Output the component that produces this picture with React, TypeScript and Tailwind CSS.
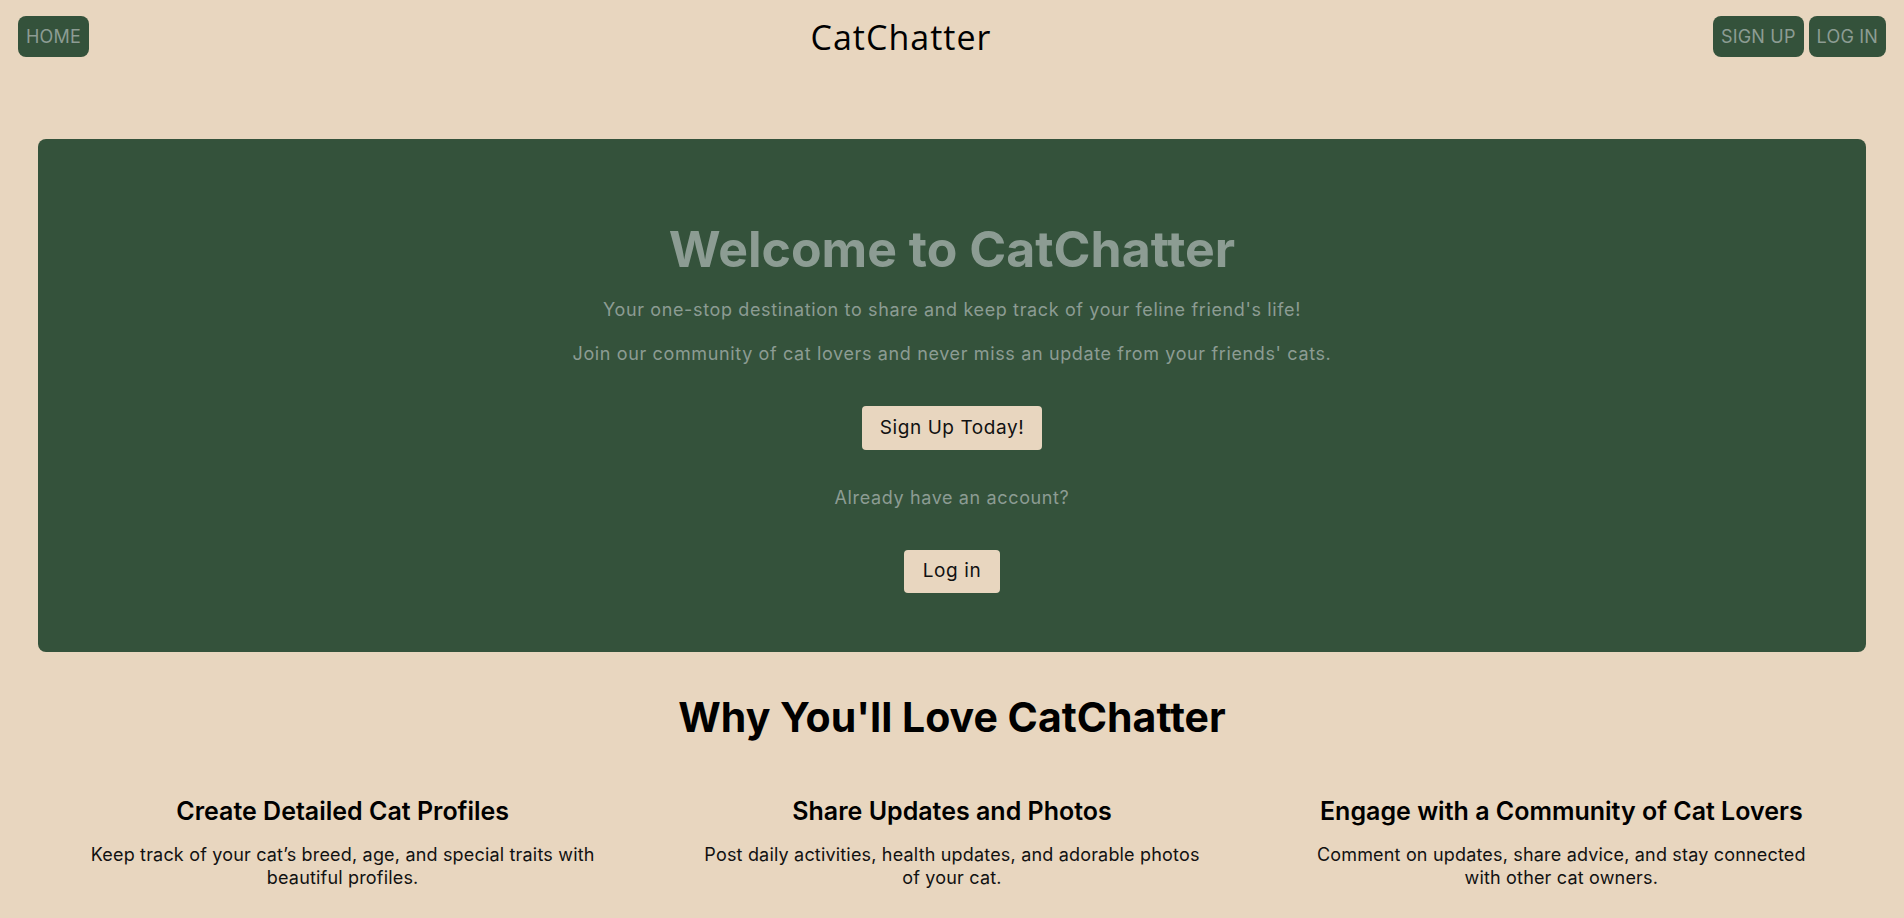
const features = [
  {
    title: 'Create Detailed Cat Profiles',
    body: 'Keep track of your cat’s breed, age, and special traits with beautiful profiles.',
  },
  {
    title: 'Share Updates and Photos',
    body: 'Post daily activities, health updates, and adorable photos of your cat.',
  },
  {
    title: 'Engage with a Community of Cat Lovers',
    body: 'Comment on updates, share advice, and stay connected with other cat owners.',
  },
];

const NavButton = ({ label }: { label: string }) => (
  <button className="h-[41px] rounded-lg bg-[#34523b] px-2 text-[18px] uppercase tracking-[0.01em] text-[#8c9c93]">
    {label}
  </button>
);

const App = () => {
  return (
    <div className="min-h-screen bg-[#e8d6bf] font-['Inter',sans-serif] text-[#111]">
      <header className="flex items-center justify-between px-[18px] pt-4">
        <NavButton label="Home" />
        <h1 className="font-['Open_Sans',sans-serif] text-[34px] leading-none tracking-[0.03em] text-black">
          CatChatter
        </h1>
        <div className="flex gap-[5px]">
          <NavButton label="Sign Up" />
          <NavButton label="Log In" />
        </div>
      </header>

      <main className="mx-[38px] mt-[82px]">
        <section className="flex h-[513px] flex-col items-center rounded-lg bg-[#34523b] pt-[80px] text-[#8c9c93]">
          <h2 className="text-[50px] font-bold leading-[60px]">Welcome to CatChatter</h2>
          <p className="mt-[17px] text-[18px] leading-[28px] tracking-[0.035em]">
            Your one-stop destination to share and keep track of your feline friend's life!
          </p>
          <p className="mt-4 text-[18px] leading-[28px] tracking-[0.035em]">
            Join our community of cat lovers and never miss an update from your friends' cats.
          </p>
          <button className="mt-[38px] h-[44px] rounded bg-[#e8d6bf] px-[18px] text-[19px] tracking-[0.03em] text-[#111]">
            Sign Up Today!
          </button>
          <p className="mt-[34px] text-[18px] leading-[28px] tracking-[0.035em]">Already have an account?</p>
          <button className="mt-[38px] h-[43px] rounded bg-[#e8d6bf] px-[19px] text-[19px] tracking-[0.03em] text-[#111]">
            Log in
          </button>
        </section>

        <h2 className="mt-[41px] text-center text-[41px] font-bold leading-[48px] text-black">
          Why You'll Love CatChatter
        </h2>

        <div className="mt-[54px] grid grid-cols-3">
          {features.map(f => (
            <div key={f.title} className="text-center">
              <h3 className="text-[25px] font-semibold leading-[32px] text-black">{f.title}</h3>
              <p className="mx-auto mt-4 max-w-[510px] text-[18px] leading-[23px] tracking-[0.01em]">{f.body}</p>
            </div>
          ))}
        </div>
      </main>
    </div>
  );
};

export default App;
